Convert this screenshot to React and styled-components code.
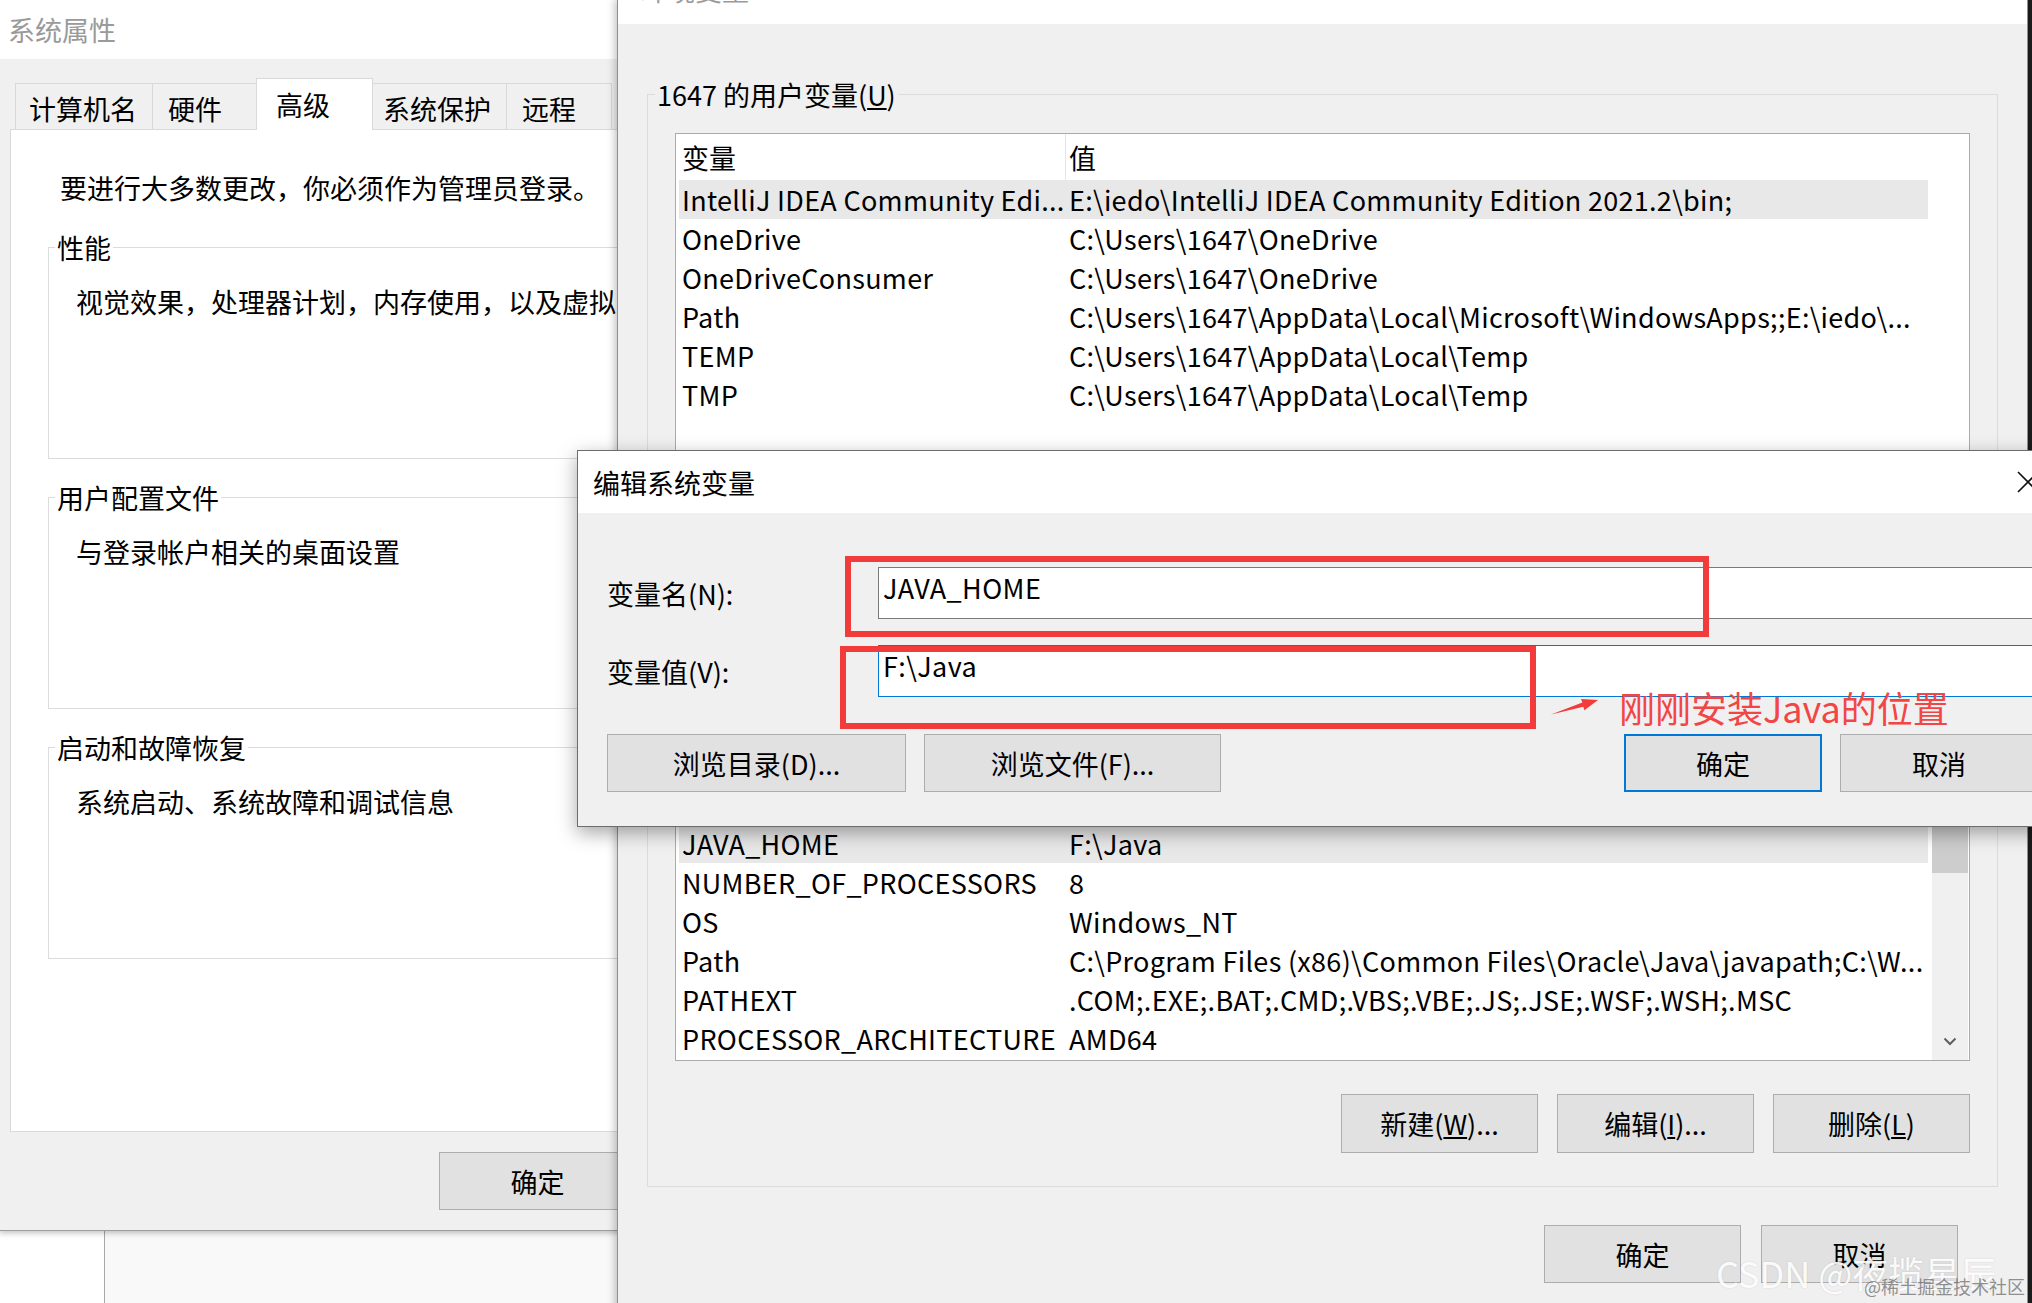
import React from "react";
import styled, { createGlobalStyle } from "styled-components";

const UI_FONT = `"Noto Sans CJK SC", "Noto Sans", sans-serif`;

const GlobalStyle = createGlobalStyle`
  *, *::before, *::after { box-sizing: border-box; }
  html, body { margin: 0; padding: 0; background: #1c1c1c; }
`;

const Desktop = styled.div`
  position: relative;
  width: 2032px;
  height: 1303px;
  overflow: hidden;
  background: #1c1c1c;
  font-family: ${UI_FONT};
  font-size: 27px;
  line-height: 35px;
  color: #000;
`;

/* window peeking out under the system properties dialog */
const BackWindow = styled.div`
  position: absolute;
  left: 0;
  top: 1180px;
  width: 640px;
  height: 140px;
  display: flex;
`;

const BackPane = styled.div`
  flex: ${(p) => (p.$w ? "none" : 1)};
  width: ${(p) => (p.$w ? `${p.$w}px` : "auto")};
  background: ${(p) => p.$bg};
  border-right: ${(p) => (p.$line ? "1px solid #a8a8a8" : "none")};
`;

const Window = styled.section`
  position: absolute;
  left: ${(p) => p.$x}px;
  top: ${(p) => p.$y}px;
  width: ${(p) => p.$w}px;
  height: ${(p) => p.$h}px;
  display: flex;
  flex-direction: column;
  background: #f0f0f0;
  border: 1px solid ${(p) => p.$edge};
  box-shadow: ${(p) => p.$shadow};
  overflow: hidden;
`;

const TitleBar = styled.header`
  flex: none;
  height: ${(p) => p.$h}px;
  padding: 0 ${(p) => p.$pr || 0}px 0 ${(p) => p.$pl}px;
  background: #fff;
  display: flex;
  align-items: ${(p) => (p.$clip ? "flex-start" : "center")};
  justify-content: space-between;
  overflow: hidden;
`;

const TitleText = styled.span`
  color: ${(p) => (p.$dim ? "#9a9a9a" : "#000")};
  margin-top: ${(p) => (p.$clip ? "-28px" : "0")};
  white-space: nowrap;
`;

/* ---------- system properties ---------- */

const SysBody = styled.div`
  flex: 1;
  min-height: 0;
  display: flex;
  flex-direction: column;
  padding: 19px 0 0 10px;
`;

const TabStrip = styled.div`
  flex: none;
  height: 51px;
  margin-left: 5px;
  display: flex;
  align-items: flex-end;
`;

const Tab = styled.div`
  position: relative;
  z-index: ${(p) => (p.$active ? 1 : 0)};
  width: ${(p) => p.$w}px;
  height: ${(p) => (p.$active ? 52 : 46)}px;
  margin-bottom: ${(p) => (p.$active ? -1 : 0)}px;
  padding: ${(p) => (p.$active ? 0 : 4)}px 0 0 ${(p) => p.$pl}px;
  display: flex;
  align-items: center;
  background: ${(p) => (p.$active ? "#fff" : "#f0f0f0")};
  border: 1px solid #d9d9d9;
  border-bottom: none;
  white-space: nowrap;

  & + & {
    margin-left: -1px;
  }
`;

const TabPanel = styled.div`
  flex: 1;
  min-height: 0;
  margin-right: 10px;
  padding: 40px 0 0 37px;
  background: #fff;
  border: 1px solid #d9d9d9;
`;

const Notice = styled.div`
  margin-left: 12px;
  white-space: nowrap;
`;

const Group = styled.fieldset`
  margin: ${(p) => p.$gap}px 0 0 0;
  padding: 0;
  min-width: 0;
  border: 1px solid #dcdcdc;
`;

const Legend = styled.legend`
  margin-left: ${(p) => p.$ml}px;
  padding: 0 2px;
  line-height: 35px;
  white-space: nowrap;
`;

const GroupText = styled.div`
  height: ${(p) => p.$h}px;
  padding: 19px 0 0 27px;
  white-space: nowrap;
`;

const Footer = styled.div`
  flex: none;
  height: ${(p) => p.$h}px;
  margin-top: ${(p) => p.$mt || 0}px;
  padding-right: ${(p) => p.$pr}px;
  display: flex;
  align-items: center;
  justify-content: flex-end;
  gap: 20px;
`;

const Button = styled.button`
  flex: none;
  width: ${(p) => p.$w}px;
  height: ${(p) => p.$h || 58}px;
  padding: 0;
  display: flex;
  align-items: center;
  justify-content: center;
  background: #e1e1e1;
  border: ${(p) => (p.$focus ? "2px solid #0078d7" : "1px solid #adadad")};
  font: inherit;
  color: #000;
  white-space: nowrap;
`;

/* ---------- environment variables ---------- */

const EnvBody = styled.div`
  flex: 1;
  min-height: 0;
  display: flex;
  flex-direction: column;
  padding: 53px 29px 0 29px;
`;

const GroupInner = styled.div`
  padding: 21px 27px 33px 27px;
`;

const ListBox = styled.div`
  height: ${(p) => p.$h}px;
  display: flex;
  background: #fff;
  border: 1px solid #ababab;
  overflow: hidden;
`;

const ListMain = styled.div`
  flex: 1;
  min-width: 0;
  padding-left: 3px;
`;

const ListRow = styled.div`
  display: grid;
  grid-template-columns: 387px 862px;
  width: 1249px;
  height: ${(p) => (p.$head ? 46 : 39)}px;
  background: ${(p) => (p.$sel ? "#e8e8e8" : "transparent")};
  white-space: nowrap;
`;

const Cell = styled.div`
  display: flex;
  align-items: center;
  padding-left: 3px;
  overflow: hidden;
  letter-spacing: ${(p) => (p.$head ? "0" : "0.3px")};
  border-right: ${(p) => (p.$divider ? "1px solid #e5e5e5" : "none")};
`;

const ScrollBar = styled.div`
  flex: none;
  width: 36px;
  margin-right: 1px;
  display: flex;
  flex-direction: column;
  background: #f0f0f0;
`;

const ScrollArrow = styled.div`
  flex: none;
  height: 37px;
  display: flex;
  align-items: center;
  justify-content: center;
`;

const ScrollThumb = styled.div`
  flex: none;
  height: 136px;
  background: #cdcdcd;
`;

const ScrollTrack = styled.div`
  flex: 1;
`;

const ButtonRow = styled.div`
  margin-top: 33px;
  display: flex;
  justify-content: flex-end;
  gap: 19px;
`;

/* ---------- edit dialog ---------- */

const DialogBody = styled.div`
  flex: 1;
  padding: 54px 41px 0 29px;
`;

const FieldGrid = styled.div`
  display: grid;
  grid-template-columns: 271px 1fr;
  grid-auto-rows: 52px;
  row-gap: 26px;
  align-items: center;
`;

const FieldLabel = styled.div`
  white-space: nowrap;
`;

const TextBox = styled.div`
  align-self: stretch;
  padding: 2px 4px 0;
  background: #fff;
  border: 1px solid ${(p) => (p.$focus ? "#0078d7" : "#7a7a7a")};
  letter-spacing: 0.4px;
  white-space: nowrap;
`;

const DialogButtons = styled.div`
  margin-top: 37px;
  display: flex;
  gap: 18px;
`;

const Spacer = styled.div`
  flex: 1;
`;

/* ---------- annotations ---------- */

const RedBox = styled.div`
  position: absolute;
  left: ${(p) => p.$x}px;
  top: ${(p) => p.$y}px;
  width: ${(p) => p.$w}px;
  height: ${(p) => p.$h}px;
  border: 6px solid #f23c3c;
`;

const Arrow = styled.svg`
  position: absolute;
  left: 1545px;
  top: 690px;
`;

const RedNote = styled.div`
  position: absolute;
  left: 1619px;
  top: 682px;
  font-size: 36px;
  line-height: 50px;
  color: #f24545;
  white-space: nowrap;
`;

const Watermark = styled.div`
  position: absolute;
  left: 1716px;
  top: 1252px;
  font-size: 36px;
  line-height: 40px;
  color: rgba(255, 255, 255, 0.93);
  text-shadow: 0 0 2px rgba(0, 0, 0, 0.12);
  white-space: nowrap;
`;

const SubMark = styled.div`
  position: absolute;
  left: 1864px;
  top: 1276px;
  font-size: 18px;
  line-height: 20px;
  color: rgba(110, 110, 110, 0.75);
  white-space: nowrap;
`;

const tabs = [
  { label: "计算机名", w: 138, pl: 13 },
  { label: "硬件", w: 105, pl: 15 },
  { label: "高级", w: 117, pl: 19, active: true },
  { label: "系统保护", w: 135, pl: 10 },
  { label: "远程", w: 106, pl: 15 },
];

const userVars = [
  ["IntelliJ IDEA Community Edi...", "E:\\iedo\\IntelliJ IDEA Community Edition 2021.2\\bin;", true],
  ["OneDrive", "C:\\Users\\1647\\OneDrive"],
  ["OneDriveConsumer", "C:\\Users\\1647\\OneDrive"],
  ["Path", "C:\\Users\\1647\\AppData\\Local\\Microsoft\\WindowsApps;;E:\\iedo\\..."],
  ["TEMP", "C:\\Users\\1647\\AppData\\Local\\Temp"],
  ["TMP", "C:\\Users\\1647\\AppData\\Local\\Temp"],
];

const sysVars = [
  ["ComSpec", "C:\\WINDOWS\\system32\\cmd.exe"],
  ["DriverData", "C:\\Windows\\System32\\Drivers\\DriverData"],
  ["JAVA_HOME", "F:\\Java", true],
  ["NUMBER_OF_PROCESSORS", "8"],
  ["OS", "Windows_NT"],
  ["Path", "C:\\Program Files (x86)\\Common Files\\Oracle\\Java\\javapath;C:\\W..."],
  ["PATHEXT", ".COM;.EXE;.BAT;.CMD;.VBS;.VBE;.JS;.JSE;.WSF;.WSH;.MSC"],
  ["PROCESSOR_ARCHITECTURE", "AMD64"],
];

function VarList({ rows, height, scroll }) {
  return (
    <ListBox $h={height}>
      <ListMain>
        <ListRow $head>
          <Cell $head $divider>变量</Cell>
          <Cell $head>值</Cell>
        </ListRow>
        {rows.map(([name, value, sel]) => (
          <ListRow key={name} $sel={sel}>
            <Cell>{name}</Cell>
            <Cell>{value}</Cell>
          </ListRow>
        ))}
      </ListMain>
      {scroll && (
        <ScrollBar>
          <ScrollArrow />
          <ScrollThumb />
          <ScrollTrack />
          <ScrollArrow>
            <svg width="14" height="9" viewBox="0 0 14 9">
              <polyline points="1.5,1.5 7,7 12.5,1.5" fill="none" stroke="#606060" strokeWidth="2" />
            </svg>
          </ScrollArrow>
        </ScrollBar>
      )}
    </ListBox>
  );
}

function CloseIcon() {
  return (
    <svg width="22" height="22" viewBox="0 0 22 22">
      <path d="M1 1 L21 21 M21 1 L1 21" stroke="#111" strokeWidth="1.6" />
    </svg>
  );
}

export default function App() {
  return (
    <>
      <GlobalStyle />
      <Desktop>
        <BackWindow>
          <BackPane $w={105} $bg="#fff" $line />
          <BackPane $bg="#f9f9f9" />
        </BackWindow>

        {/* 系统属性 */}
        <Window $x={-1} $y={-1} $w={662} $h={1232} $edge="#9d9d9d" $shadow="0 2px 6px rgba(0,0,0,0.25)">
          <TitleBar $h={59} $pl={8}>
            <TitleText $dim>系统属性</TitleText>
          </TitleBar>
          <SysBody>
            <TabStrip>
              {tabs.map((t) => (
                <Tab key={t.label} $w={t.w} $pl={t.pl} $active={t.active}>
                  {t.label}
                </Tab>
              ))}
            </TabStrip>
            <TabPanel>
              <Notice>要进行大多数更改，你必须作为管理员登录。</Notice>
              <Group $gap={25}>
                <Legend $ml={6}>性能</Legend>
                <GroupText $h={193}>视觉效果，处理器计划，内存使用，以及虚拟内存</GroupText>
              </Group>
              <Group $gap={21}>
                <Legend $ml={6}>用户配置文件</Legend>
                <GroupText $h={193}>与登录帐户相关的桌面设置</GroupText>
              </Group>
              <Group $gap={21}>
                <Legend $ml={6}>启动和故障恢复</Legend>
                <GroupText $h={193}>系统启动、系统故障和调试信息</GroupText>
              </Group>
            </TabPanel>
            <Footer $h={98} $pr={24}>
              <Button $w={197}>确定</Button>
            </Footer>
          </SysBody>
        </Window>

        {/* 环境变量 */}
        <Window $x={617} $y={-1} $w={1411} $h={1400} $edge="#8f8f8f" $shadow="-2px 0 8px rgba(0,0,0,0.25)">
          <TitleBar $h={24} $pl={23} $clip>
            <TitleText $dim $clip>环境变量</TitleText>
          </TitleBar>
          <EnvBody>
            <Group $gap={0}>
              <Legend $ml={7}>
                1647 的用户变量(<u>U</u>)
              </Legend>
              <GroupInner>
                <VarList rows={userVars} height={364} />
                <ButtonRow>
                  <Button $w={197} $h={59}>新建(<u>N</u>)...</Button>
                  <Button $w={197} $h={59}>编辑(<u>E</u>)...</Button>
                  <Button $w={197} $h={59}>删除(<u>D</u>)</Button>
                </ButtonRow>
              </GroupInner>
            </Group>
            <Group $gap={20}>
              <Legend $ml={7}>
                系统变量(<u>S</u>)
              </Legend>
              <GroupInner>
                <VarList rows={sysVars} height={362} scroll />
                <ButtonRow>
                  <Button $w={197} $h={59}>新建(<u>W</u>)...</Button>
                  <Button $w={197} $h={59}>编辑(<u>I</u>)...</Button>
                  <Button $w={197} $h={59}>删除(<u>L</u>)</Button>
                </ButtonRow>
              </GroupInner>
            </Group>
            <Footer $h={58} $mt={38} $pr={40}>
              <Button $w={197}>确定</Button>
              <Button $w={197}>取消</Button>
            </Footer>
          </EnvBody>
        </Window>

        {/* 编辑系统变量 */}
        <Window $x={577} $y={450} $w={1503} $h={377} $edge="#6d6d6d" $shadow="0 6px 18px rgba(0,0,0,0.35)">
          <TitleBar $h={62} $pl={15} $pr={40}>
            <TitleText>编辑系统变量</TitleText>
            <CloseIcon />
          </TitleBar>
          <DialogBody>
            <FieldGrid>
              <FieldLabel>变量名(N):</FieldLabel>
              <TextBox>JAVA_HOME</TextBox>
              <FieldLabel>变量值(V):</FieldLabel>
              <TextBox $focus>F:\Java</TextBox>
            </FieldGrid>
            <DialogButtons>
              <Button $w={299}>浏览目录(D)...</Button>
              <Button $w={297}>浏览文件(F)...</Button>
              <Spacer />
              <Button $w={198} $focus>确定</Button>
              <Button $w={198}>取消</Button>
            </DialogButtons>
          </DialogBody>
        </Window>

        <RedBox $x={845} $y={556} $w={864} $h={81} />
        <RedBox $x={840} $y={646} $w={696} $h={83} />
        <Arrow width="62" height="30" viewBox="0 0 62 30">
          <polygon points="6,24.5 37.4,12.6 36,8.9 53,10 39.4,20.3 38.3,16.8" fill="#f23c3c" />
        </Arrow>
        <RedNote>刚刚安装Java的位置</RedNote>

        <Watermark>CSDN @夜揽星辰</Watermark>
        <SubMark>@稀土掘金技术社区</SubMark>
      </Desktop>
    </>
  );
}
